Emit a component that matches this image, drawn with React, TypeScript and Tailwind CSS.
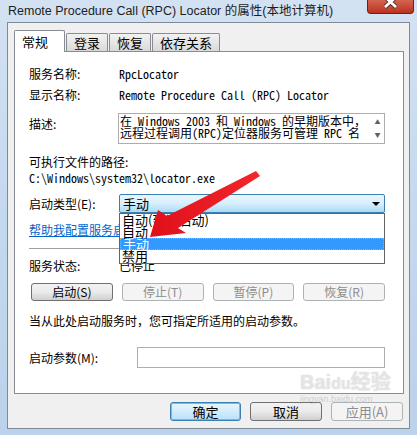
import React from "react";

const cjk = "font-['Noto_Sans_CJK_SC',sans-serif]";
const mono = "font-['Noto_Sans_Mono_CJK_SC','Liberation_Mono','Noto_Sans_CJK_SC',monospace]";

const Arrow = () => (
  <svg className="absolute left-0 top-0 z-20 pointer-events-none" width="417" height="435">
    <defs>
      <linearGradient id="ar" x1="0" y1="0" x2="1" y2="0">
        <stop offset="0" stopColor="#e0101a" />
        <stop offset="1" stopColor="#f2262b" />
      </linearGradient>
    </defs>
    <polygon
      points="150,237 158,210 167,216 256,171 260,176 178,228 186,233"
      fill="url(#ar)"
    />
  </svg>
);

const TabBtn = ({ label, active }: { label: string; active?: boolean }) =>
  active ? (
    <div className="h-[22px] w-[51px] -mb-px z-10 bg-white border border-[#898c95] border-b-0 rounded-t-[2px] pl-[7px] pt-[1px] text-[13px] leading-[20px]">
      {label}
    </div>
  ) : (
    <div className="h-[18px] mt-[3px] px-[7px] border border-[#898c95] border-b-0 rounded-t-[2px] bg-gradient-to-b from-[#f2f2f2] to-[#d9d9d9] text-[13px] leading-[18px]">
      {label}
    </div>
  );

const SmallBtn = ({ label, disabled }: { label: string; disabled?: boolean }) => (
  <div
    className={
      disabled
        ? "h-[18px] rounded-[3px] border border-[#adb2b5] bg-[#f4f4f4] text-[#8d8d8d] flex items-center justify-center text-[12px]"
        : "h-[18px] rounded-[3px] border border-[#707070] bg-gradient-to-b from-[#f2f2f2] via-[#ebebeb] to-[#cfcfcf] flex items-center justify-center text-[12px]"
    }
  >
    {label}
  </div>
);

export default function App() {
  return (
    <div
      className={`relative w-[417px] h-[435px] overflow-hidden bg-gradient-to-b from-[#d3e2f3] via-[#c4d8ee] to-[#bcd2ea] text-black ${cjk}`}
    >
      {/* title bar */}
      <div className="h-[22px] flex justify-between">
        <div className="pl-[8px] pt-[1px] text-[12.5px] leading-[20px] text-[#1e1e1e] font-['Liberation_Sans','Noto_Sans_CJK_SC',sans-serif]">
          Remote Procedure Call (RPC) Locator 的属性(本地计算机)
        </div>
        <div className="mr-[3px] w-[47px] h-[14px] rounded-b-[4px] border border-t-0 border-[#6b2219] bg-gradient-to-b from-[#d5634f] to-[#b9321f] overflow-hidden">
          <svg width="45" height="14" viewBox="0 0 45 14">
            <path d="M17 -3 L28 7 M28 -3 L17 7" stroke="#5a2a22" strokeWidth="4.5" />
            <path d="M17 -3 L28 7 M28 -3 L17 7" stroke="#fff" strokeWidth="2.8" />
          </svg>
        </div>
      </div>

      {/* body */}
      <div className="ml-[7px] w-[403px] h-[407px] border border-[#7f8a98] bg-[#f0f0f0] px-[6px] pt-[7px]">
        {/* tabs */}
        <div className="flex items-end h-[21px] gap-[1px]">
          <TabBtn label="常规" active />
          <TabBtn label="登录" />
          <TabBtn label="恢复" />
          <TabBtn label="依存关系" />
        </div>
        {/* panel */}
        <div className="relative w-[390px] h-[343px] border border-[#898c95] bg-white pl-[14px] pr-[18px] text-[12px]">
          <div className="mt-[12px] h-[20px] flex items-center">
            <div className="w-[90px]">服务名称:</div>
            <div className={mono}>RpcLocator</div>
          </div>
          <div className="mt-[1px] h-[20px] flex items-center">
            <div className="w-[90px]">显示名称:</div>
            <div className={mono}>Remote Procedure Call (RPC) Locator</div>
          </div>
          <div className="mt-[8px] flex items-start">
            <div className="w-[89px] mt-[1px] leading-[20px]">描述:</div>
            <div className="flex-1 h-[31px] border border-[#abadb3] flex">
              <div className={`flex-1 pl-[1px] pt-[1px] text-[12px] leading-[12px] overflow-hidden whitespace-nowrap ${mono}`}>
                <div>在 Windows 2003 和 Windows 的早期版本中，</div>
                <div>远程过程调用(RPC)定位器服务可管理 RPC 名</div>
              </div>
              <div className="w-[13px] flex flex-col items-center justify-between py-[5px] text-[#606060] text-[6px] leading-[6px]">
                <span>▲</span>
                <span>▼</span>
              </div>
            </div>
          </div>
          <div className="mt-[10px] leading-[16px]">可执行文件的路径:</div>
          <div className={`leading-[16px] ${mono}`}>C:\Windows\system32\locator.exe</div>
          <div className="mt-[8px] flex items-center relative">
            <div className="w-[90px]">启动类型(E):</div>
            <div className="flex-1 h-[19px] rounded-[2px] border border-[#3c7fb1] bg-gradient-to-b from-[#eaf6fd] via-[#d7effc] to-[#a9dbf6] flex items-center justify-between pl-[3px] pr-[4px]">
              <span className="text-[13px]">手动</span>
              <svg width="8" height="4" viewBox="0 0 8 4">
                <polygon points="0,0 8,0 4,4" fill="#000" />
              </svg>
            </div>
            {/* dropdown list */}
            <div className="absolute left-[90px] right-0 top-[19px] z-10 border border-[#646464] bg-white text-[13px] leading-[12px] pb-px">
              <div className="h-[12px] pl-[2px]">自动(延迟启动)</div>
              <div className="h-[12px] pl-[2px]">自动</div>
              <div className="h-[12px] pl-[2px] bg-[#3399ff] text-white border border-dotted border-[#f0a030] leading-[10px]">手动</div>
              <div className="h-[12px] pl-[2px]">禁用</div>
            </div>
          </div>
          <div className="mt-[9px] leading-[16px] text-[#0066cc] underline">帮助我配置服务启动选项。</div>
          <div className="mt-[10px] h-px bg-[#a0a0a0]" />
          <div className="mt-[9px] h-[16px] flex items-center">
            <div className="w-[90px]">服务状态:</div>
            <div>已停止</div>
          </div>
          <div className="mt-[9px] ml-[2px] grid grid-cols-4 gap-[9px]">
            <SmallBtn label="启动(S)" />
            <SmallBtn label="停止(T)" disabled />
            <SmallBtn label="暂停(P)" disabled />
            <SmallBtn label="恢复(R)" disabled />
          </div>
          <div className="mt-[12px] leading-[16px]">当从此处启动服务时，您可指定所适用的启动参数。</div>
          <div className="mt-[18px] flex items-center">
            <div className="w-[108px]">启动参数(M):</div>
            <div className="flex-1 h-[21px] border border-[#abadb3] bg-white" />
          </div>
        </div>
        {/* bottom buttons */}
        <div className="mt-[8px] flex justify-end gap-[9px] text-[13px]">
          <div className="w-[71px] h-[19px] rounded-[3px] border border-[#3c7fb1] bg-gradient-to-b from-[#eaf6fd] to-[#b7e2fb] flex items-center justify-center shadow-[inset_0_0_0_1px_#48d0f8]">
            确定
          </div>
          <div className="w-[72px] h-[19px] rounded-[3px] border border-[#707070] bg-gradient-to-b from-[#f2f2f2] via-[#ebebeb] to-[#cfcfcf] flex items-center justify-center">
            取消
          </div>
          <div className="w-[72px] h-[19px] rounded-[3px] border border-[#adb2b5] bg-[#f4f4f4] text-[#8d8d8d] flex items-center justify-center">
            应用(A)
          </div>
        </div>
      </div>

      {/* watermark */}
      <div className="absolute left-[300px] top-[372px] text-white/60 font-bold text-[20px] leading-[20px] font-['Liberation_Sans','Noto_Sans_CJK_SC',sans-serif] [text-shadow:0_0_1px_#bbb] pointer-events-none">
        Bai<span className="text-[16px]">du</span>经验
        <div className="text-[9px] leading-[10px] font-normal text-[#aaa]/50 [text-shadow:none]">jingyan.baidu.com</div>
      </div>

      <Arrow />
    </div>
  );
}
